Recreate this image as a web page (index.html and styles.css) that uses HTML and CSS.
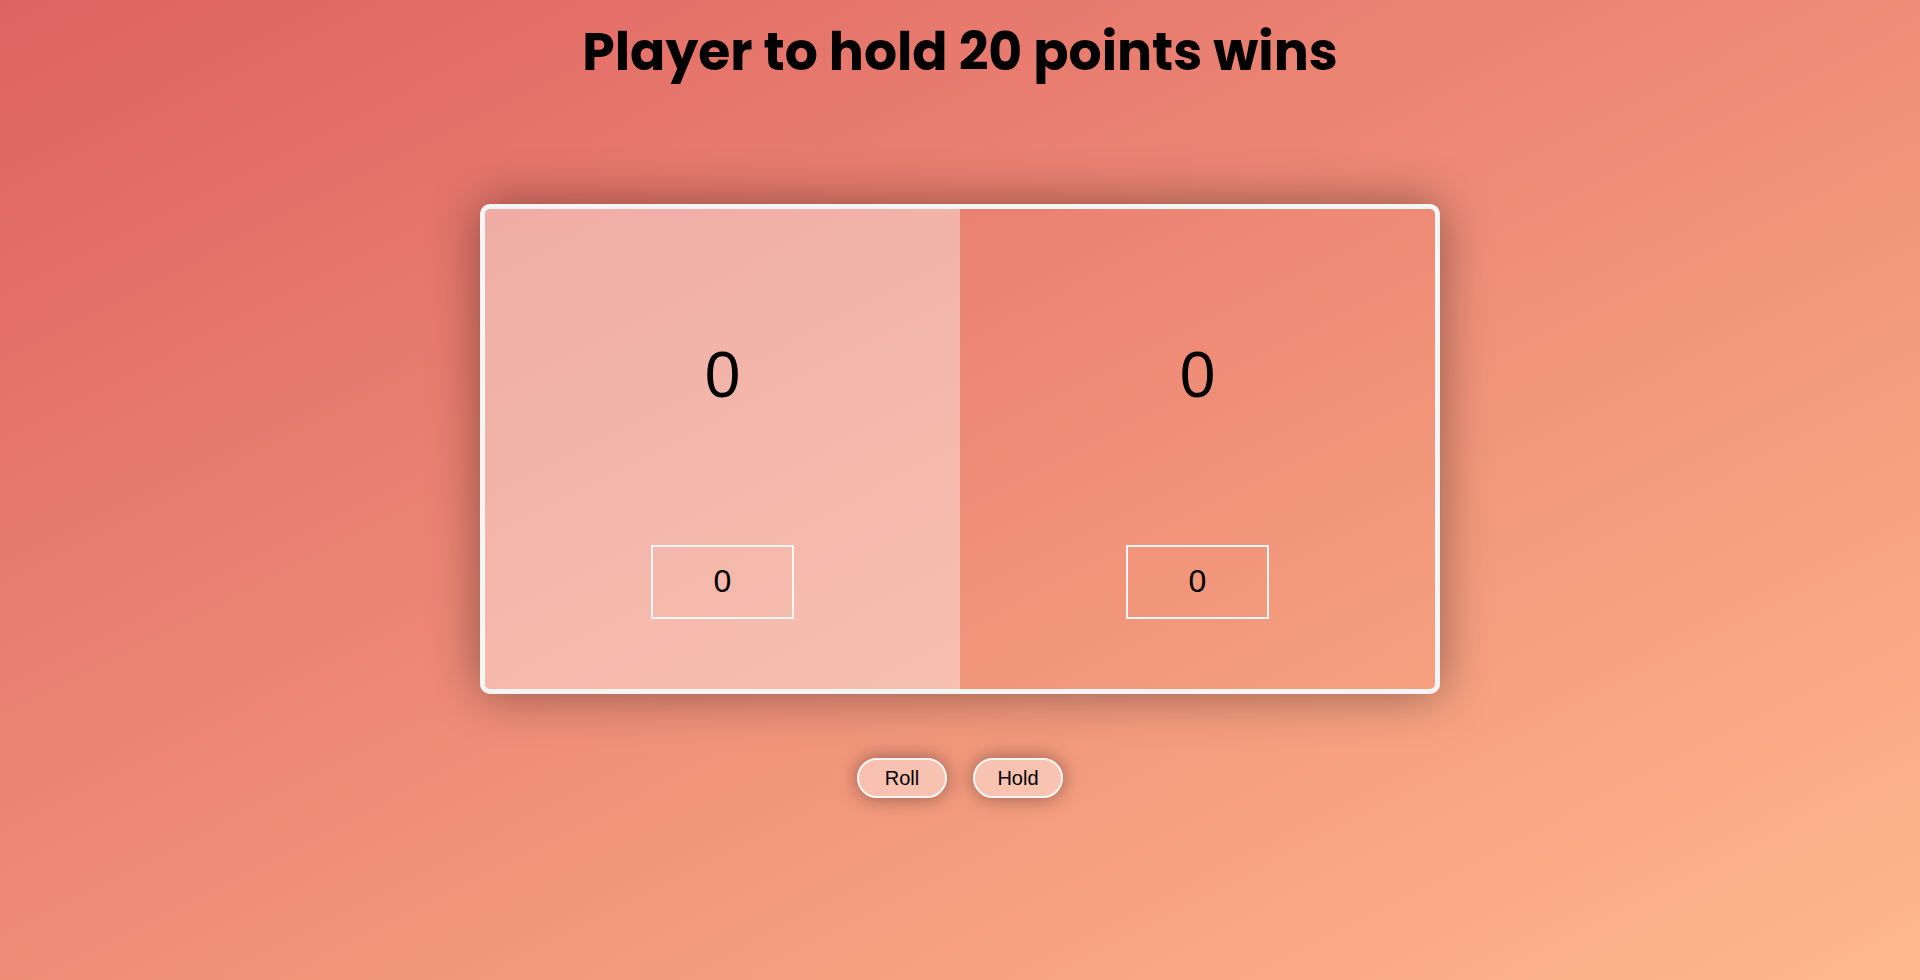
FILE: index.html
```html
<!DOCTYPE html>
<html lang="en">
<head>
<meta charset="utf-8">
<meta name="viewport" content="width=device-width, initial-scale=1">
<title>Dice game</title>
<link rel="stylesheet" href="styles.css">
</head>
<body>
<h1 class="title">Player to hold 20 points wins</h1>
<main class="game">
  <div class="board">
    <section class="player player-active" aria-label="Player 1">
      <p class="score">0</p>
      <p class="current">0</p>
    </section>
    <section class="player" aria-label="Player 2">
      <p class="score">0</p>
      <p class="current">0</p>
    </section>
  </div>
  <div class="controls">
    <button class="btn" type="button">Roll</button>
    <button class="btn" type="button">Hold</button>
  </div>
</main>
</body>
</html>
```
FILE: styles.css
```css
* {
  box-sizing: border-box;
  margin: 0;
}

body {
  min-height: 100vh;
  padding-top: 12px;
  background: linear-gradient(to bottom right, #de6262, #ffb88c);
  font-family: "Liberation Sans", Arial, sans-serif;
  color: #000;
}

.title {
  font-family: Poppins, Inter, sans-serif;
  font-size: 52px;
  font-weight: 700;
  line-height: 80px;
  text-align: center;
}

.game {
  display: flex;
  flex-direction: column;
  align-items: center;
  gap: 64px;
  padding-top: 112px;
}

.board {
  display: flex;
  width: 50%;
  height: 50vh;
  border: 5px solid whitesmoke;
  border-radius: 10px;
  box-shadow: 0 0 50px rgba(0, 0, 0, 0.4);
}

.player {
  display: flex;
  flex: 1;
  flex-direction: column;
  align-items: center;
  justify-content: space-between;
  padding: 128px 0 70px;
}

.player-active {
  border-radius: 5px 0 0 5px;
  background: rgba(255, 255, 255, 0.4);
}

.score {
  font-size: 64px;
  line-height: 76px;
}

.current {
  width: 30%;
  padding-bottom: 2px;
  border: 2px solid whitesmoke;
  font-size: 32px;
  line-height: 68px;
  text-align: center;
}

.controls {
  display: flex;
  gap: 26px;
}

.btn {
  width: 90px;
  height: 40px;
  border: 2px solid whitesmoke;
  border-radius: 20px;
  background: rgba(255, 255, 255, 0.4);
  box-shadow: 0 0 20px rgba(0, 0, 0, 0.4);
  color: inherit;
  font-family: inherit;
  font-size: 20px;
}
```
